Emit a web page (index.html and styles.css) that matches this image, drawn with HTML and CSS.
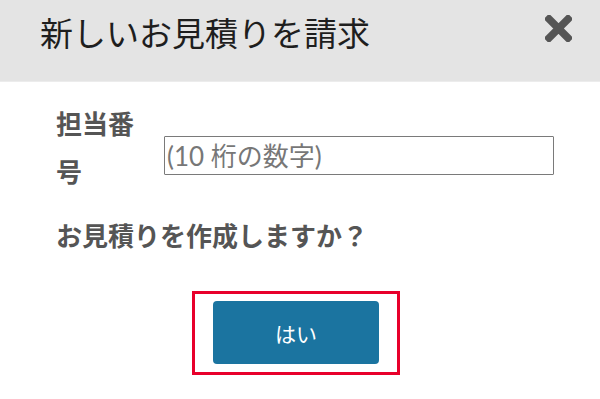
FILE: index.html
```html
<!DOCTYPE html>
<html lang="ja">
<head>
<meta charset="utf-8">
<title>新しいお見積りを請求</title>
<link rel="stylesheet" href="styles.css">
</head>
<body>
<div class="dialog">
  <div class="header">
    <h1 class="title">新しいお見積りを請求</h1>
    <button class="close" aria-label="閉じる">
      <svg width="27" height="27" viewBox="0 0 27 27">
        <path d="M4 4 L23 23 M23 4 L4 23" stroke="#555" stroke-width="7.5" stroke-linecap="square" fill="none"/>
      </svg>
    </button>
  </div>
  <div class="content">
    <div class="field">
      <label class="label" for="num">担当番号</label>
      <input class="input" id="num" type="text" placeholder="(10 桁の数字)">
    </div>
    <p class="question">お見積りを作成しますか？</p>
    <div class="actions">
      <div class="highlight">
        <button class="yes">はい</button>
      </div>
    </div>
  </div>
</div>
</body>
</html>
```
FILE: styles.css
```css
html, body {
  margin: 0;
  padding: 0;
  background: #fff;
}
body {
  font-family: "Lato", "Noto Sans CJK JP", sans-serif;
  width: 600px;
  height: 399px;
  overflow: hidden;
}
.header {
  height: 82px;
  background: #e4e4e4;
  display: flex;
  justify-content: space-between;
  align-items: flex-start;
  padding: 0 28px 0 40px;
  box-sizing: border-box;
  border-bottom: 1px solid #ececec;
}
.title {
  margin: 15px 0 0;
  font-size: 33px;
  line-height: 36px;
  font-weight: normal;
  color: #1e1e1e;
}
.close {
  margin-top: 15px;
  padding: 0;
  border: 0;
  background: none;
  width: 27px;
  height: 27px;
  display: block;
}
.close svg {
  display: block;
}
.content {
  padding: 18px 0 0 56px;
}
.field {
  display: flex;
  align-items: flex-start;
}
.label {
  width: 90px;
  margin-right: 18px;
  font-size: 26px;
  line-height: 48px;
  font-weight: bold;
  color: #555;
}
.input {
  margin-top: 36px;
  width: 390px;
  height: 39px;
  box-sizing: border-box;
  border: 1px solid #7a7a7a;
  border-radius: 1px;
  padding: 0 2px;
  font-family: "Lato", "Noto Sans CJK JP", sans-serif;
  font-size: 26px;
  color: #333;
  outline: none;
}
.input::placeholder {
  color: #777;
}
.question {
  margin: 22px 0 0;
  font-size: 26px;
  line-height: 36px;
  font-weight: bold;
  color: #555;
}
.actions {
  display: flex;
  justify-content: center;
  margin-top: 37px;
  padding-right: 64px;
}
.highlight {
  border: 3px solid #e8002b;
  padding: 7px 18px 8px;
}
.yes {
  display: block;
  width: 166px;
  height: 63px;
  border: 0;
  border-radius: 4px;
  background: #1b74a0;
  color: #fff;
  font-family: "Lato", "Noto Sans CJK JP", sans-serif;
  font-size: 21px;
  padding: 0;
}
```
